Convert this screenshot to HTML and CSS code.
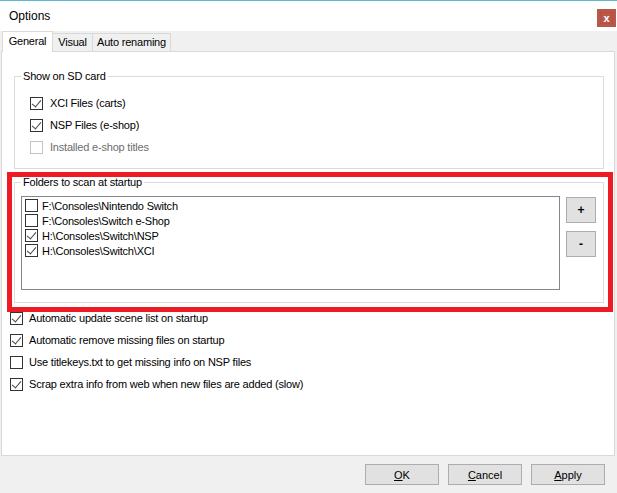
FILE: index.html
```html
<!DOCTYPE html>
<html>
<head>
    <title>Options</title>
    <link rel="stylesheet" href="styles.css">
</head>
<body>
<div class="window">
    <div class="titlebar">
        <span class="caption">Options</span>
        <button class="close">x</button>
    </div>
    <div class="tabs">
        <span class="tab active">General</span>
        <span class="tab tab-visual">Visual</span>
        <span class="tab tab-auto">Auto renaming</span>
    </div>
    <div class="page">
        <div class="group sd-group">
            <div class="group-title">Show on SD card</div>
            <div class="group-rows">
                <label class="check"><span class="box on"></span>XCI Files (carts)</label>
                <label class="check"><span class="box on"></span>NSP Files (e-shop)</label>
                <label class="check disabled"><span class="box"></span>Installed e-shop titles</label>
            </div>
        </div>

        <div class="group folder-group">
            <div class="group-title">Folders to scan at startup</div>
            <div class="folder-body">
                <div class="listbox">
                    <div class="item"><span class="box"></span>F:\Consoles\Nintendo Switch</div>
                    <div class="item"><span class="box"></span>F:\Consoles\Switch e-Shop</div>
                    <div class="item"><span class="box on"></span>H:\Consoles\Switch\NSP</div>
                    <div class="item"><span class="box on"></span>H:\Consoles\Switch\XCI</div>
                </div>
                <div class="side-buttons">
                    <button class="btn small">+</button>
                    <button class="btn small">-</button>
                </div>
            </div>
            <div class="highlight"></div>
        </div>

        <div class="options">
            <label class="check"><span class="box on"></span>Automatic update scene list on startup</label>
            <label class="check"><span class="box on"></span>Automatic remove missing files on startup</label>
            <label class="check"><span class="box"></span>Use titlekeys.txt to get missing info on NSP files</label>
            <label class="check"><span class="box on"></span>Scrap extra info from web when new files are added (slow)</label>
        </div>
    </div>
    <div class="footer">
        <button class="btn"><u>O</u>K</button>
        <button class="btn"><u>C</u>ancel</button>
        <button class="btn"><u>A</u>pply</button>
    </div>
</div>
</body>
</html>
```

FILE: styles.css
```css
* {
    box-sizing: border-box;
}
body {
    margin: 0;
    font-family: "Liberation Sans", Arial, sans-serif;
    font-size: 11px;
    letter-spacing: -0.2px;
    color: #000;
}
.window {
    width: 617px;
    height: 493px;
    background: #f0f0f0;
    border-top: 1px solid #5fb9d1;
    overflow: hidden;
}

/* title bar */
.titlebar {
    height: 30px;
    background: #fff;
    display: flex;
    justify-content: space-between;
    align-items: flex-start;
    padding-left: 9px;
}
.caption {
    font-size: 12px;
    letter-spacing: 0;
    line-height: 30px;
}
.close {
    width: 19px;
    height: 18px;
    margin: 8px 1px 0 0;
    padding: 0;
    border: none;
    background: #b5594a;
    outline: 1px dotted #e8312a;
    outline-offset: -4px;
    color: #fff;
    font: bold 11px "Liberation Sans", Arial, sans-serif;
    line-height: 17px;
}

/* tabs */
.tabs {
    height: 20px;
    display: flex;
    align-items: flex-end;
    padding-left: 2px;
}
.tab {
    height: 18px;
    line-height: 17px;
    text-align: center;
    border: 1px solid #d9d9d9;
    border-bottom: none;
    background: #f0f0f0;
}
.tab.active {
    position: relative;
    z-index: 1;
    width: 51px;
    height: 21px;
    margin-bottom: -1px;
    line-height: 19px;
    background: #fff;
}
.tab-visual {
    width: 41px;
    margin-left: -1px;
}
.tab-auto {
    width: 79px;
    margin-left: -1px;
}

/* tab page */
.page {
    height: 405px;
    margin: 0 2px 0 1px;
    padding: 0 0 0 8px;
    background: #fff;
    border: 1px solid #d9d9d9;
}
.group {
    position: relative;
    margin-left: 4px;
    margin-right: 10px;
    border: 1px solid #dcdcdc;
}
.group-title {
    width: fit-content;
    margin: -7px 0 0 6px;
    padding: 0 2px;
    line-height: 13px;
    background: #fff;
}
.sd-group {
    margin-top: 24px;
    padding-bottom: 10px;
}
.group-rows {
    margin: 9px 0 0 15px;
}
.check {
    display: flex;
    align-items: center;
    gap: 7px;
    height: 22px;
}
.check.disabled {
    color: #6d6d6d;
}
.box {
    position: relative;
    flex: none;
    width: 13px;
    height: 13px;
    border: 1px solid #333;
    background: #fff;
}
.disabled .box {
    border-color: #c4c4c4;
}
.box.on::after {
    content: "";
    position: absolute;
    left: 3px;
    top: 0;
    width: 4px;
    height: 8px;
    border: solid #444;
    border-width: 0 1px 1px 0;
    transform: rotate(40deg);
}

/* folders */
.folder-group {
    margin-top: 13px;
    padding-bottom: 12px;
}
.folder-body {
    display: flex;
    gap: 6px;
    margin: 7px 7px 0 6px;
}
.listbox {
    flex: 1;
    height: 94px;
    padding: 1px 0 0 3px;
    border: 1px solid #828790;
}
.item {
    display: flex;
    align-items: center;
    gap: 4px;
    height: 15px;
    white-space: nowrap;
}
.side-buttons {
    display: flex;
    flex-direction: column;
    gap: 8px;
    padding-top: 1px;
}
.btn {
    width: 74px;
    height: 21px;
    padding: 0;
    background: #e1e1e1;
    border: 1px solid #adadad;
    font: inherit;
    color: #000;
}
.btn.small {
    width: 30px;
    height: 26px;
    font-weight: bold;
    font-size: 12px;
}
.highlight {
    position: absolute;
    left: -8px;
    top: -11px;
    right: -10px;
    bottom: -10px;
    border: 5px solid #ed1c24;
    pointer-events: none;
}

.options {
    margin-top: 4px;
}
.options .check {
    gap: 6px;
}

/* dialog buttons */
.footer {
    display: flex;
    justify-content: flex-end;
    gap: 9px;
    padding: 8px 12px 0 0;
}
```
